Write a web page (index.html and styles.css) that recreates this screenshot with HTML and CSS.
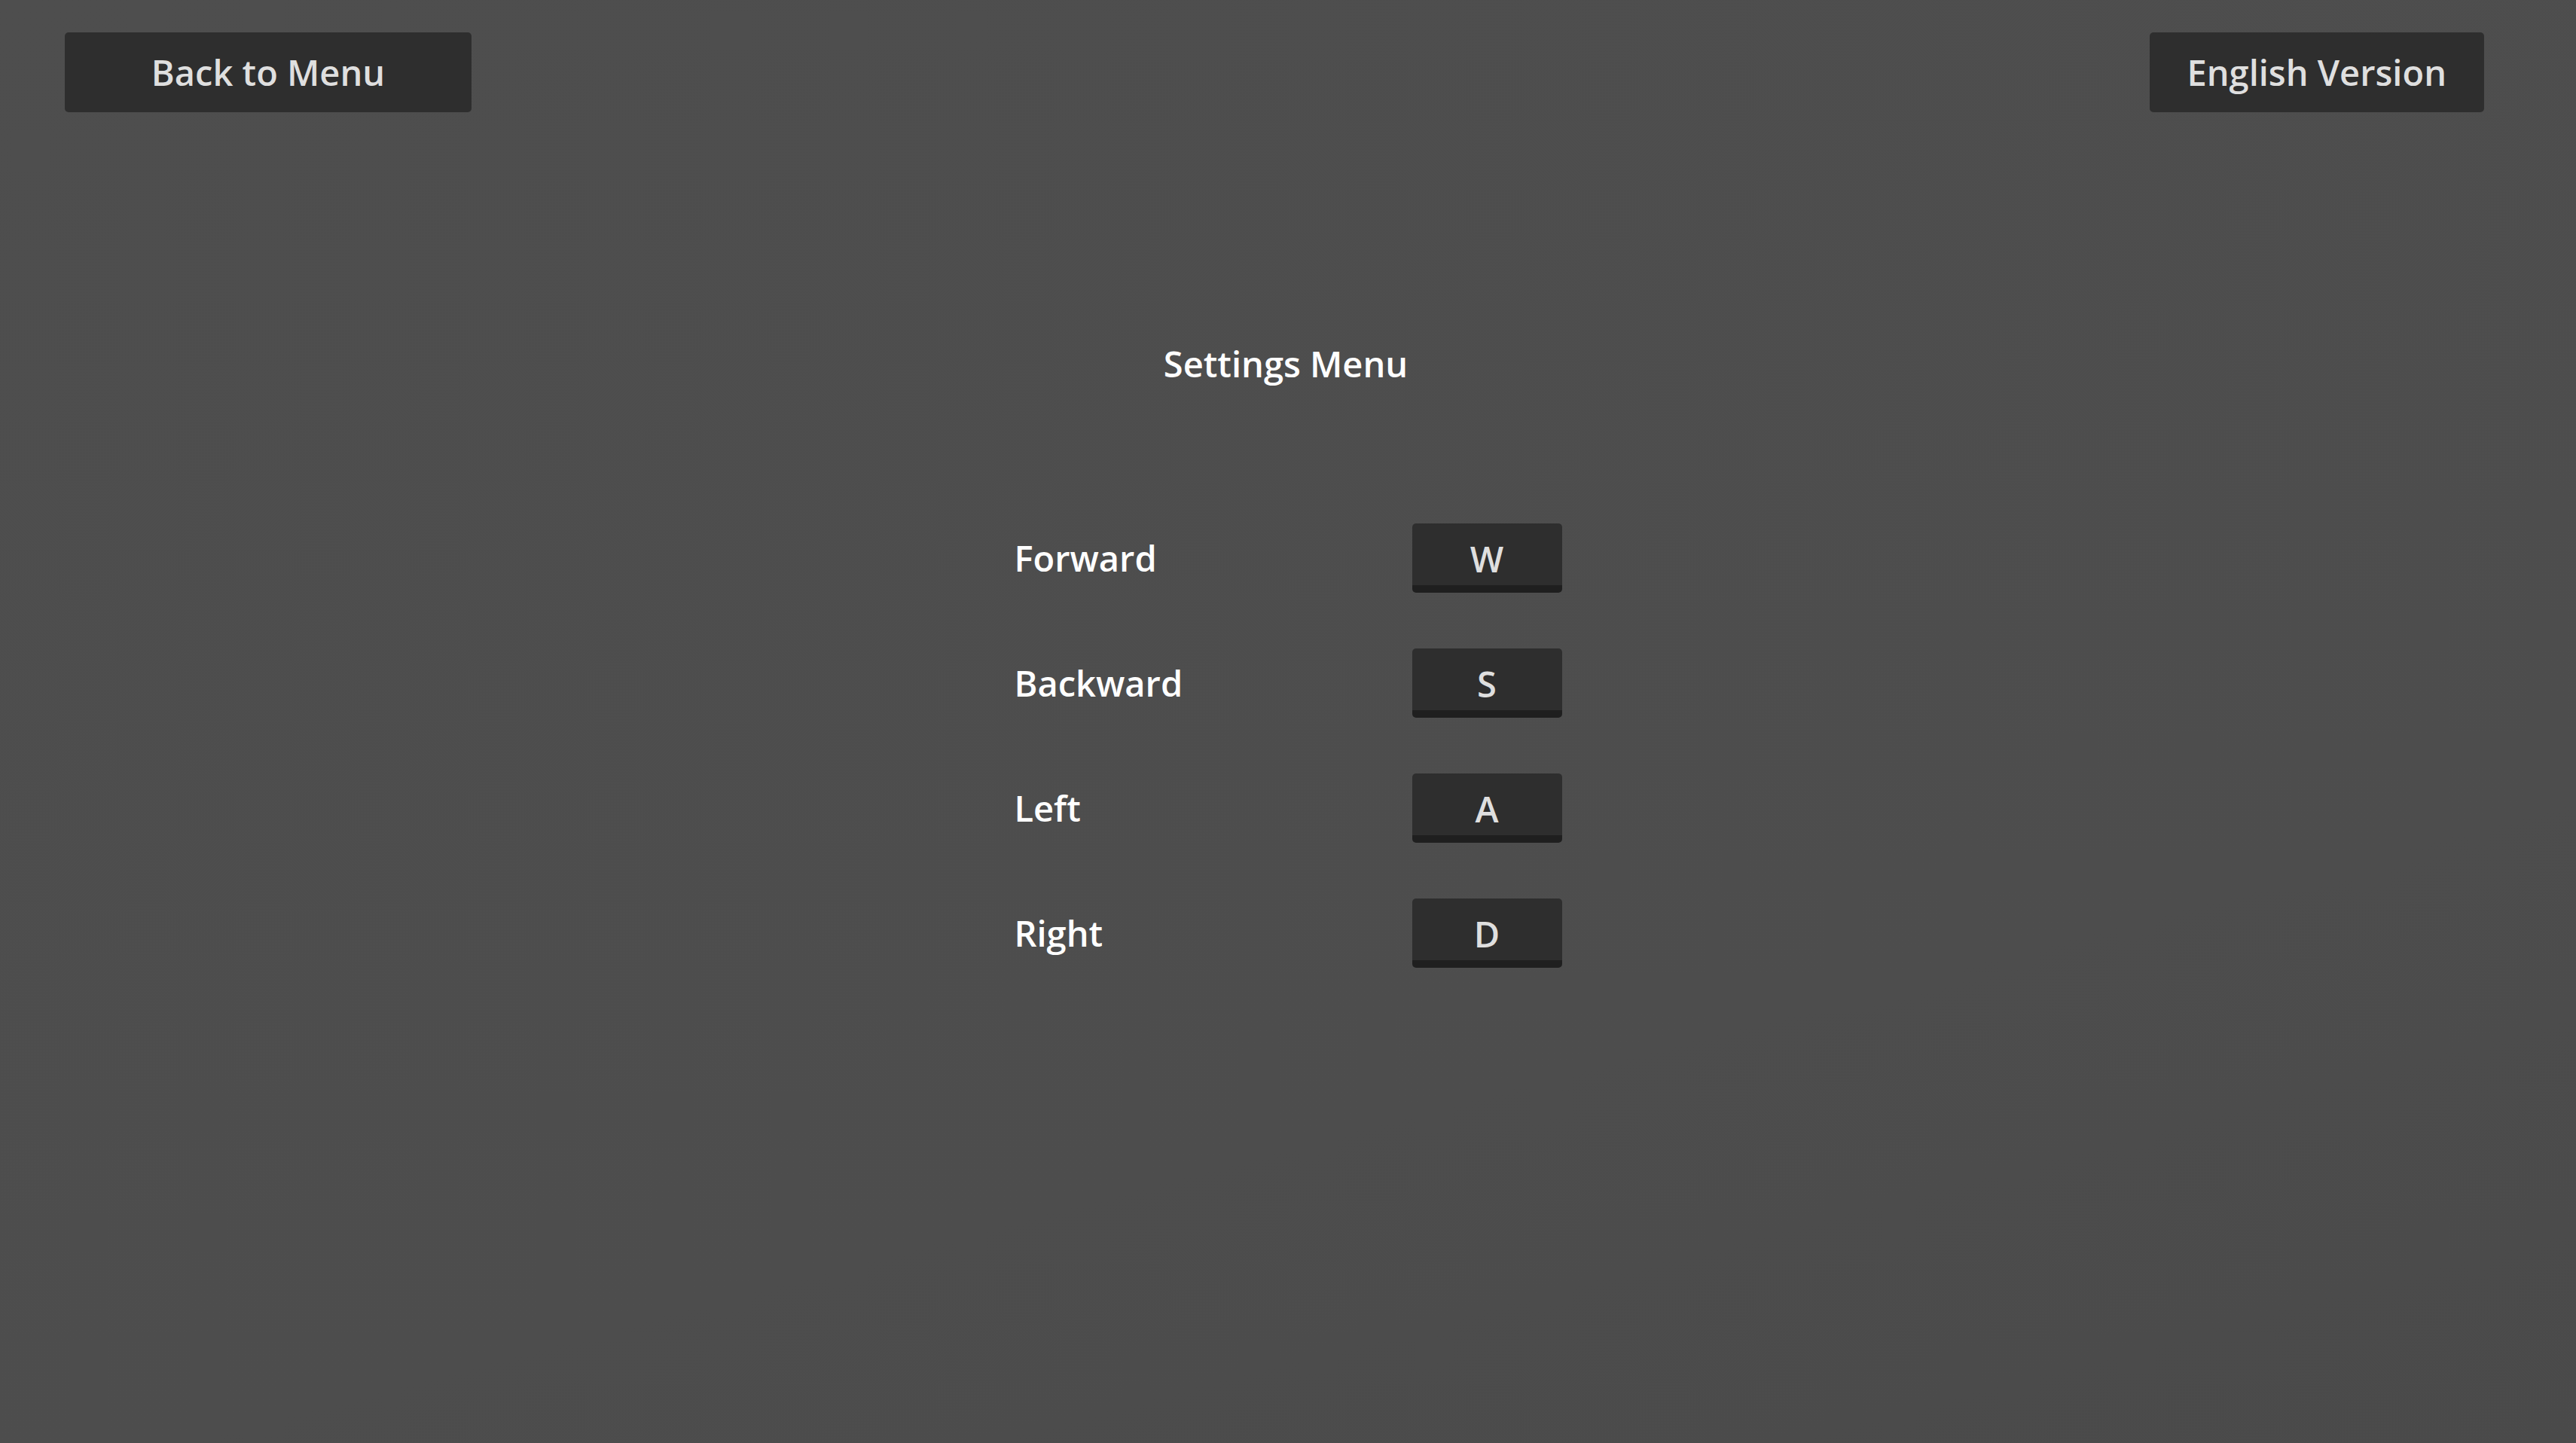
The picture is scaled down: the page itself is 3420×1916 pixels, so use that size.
FILE: index.html
```html
<!DOCTYPE html>
<html lang="en">
<head>
<meta charset="utf-8">
<title>Settings Menu</title>
<link rel="stylesheet" href="styles.css">
</head>
<body>
<div class="screen">
  <header class="topbar">
    <button class="btn btn-back">Back to Menu</button>
    <button class="btn btn-lang">English Version</button>
  </header>
  <main class="settings">
    <h1 class="title">Settings Menu</h1>
    <div class="bindings">
      <div class="row"><span class="label">Forward</span><button class="key">W</button></div>
      <div class="row"><span class="label">Backward</span><button class="key">S</button></div>
      <div class="row"><span class="label">Left</span><button class="key">A</button></div>
      <div class="row"><span class="label">Right</span><button class="key">D</button></div>
    </div>
  </main>
</div>
</body>
</html>
```

FILE: styles.css
```css
html, body {
  margin: 0;
  padding: 0;
  width: 100%;
  height: 100%;
}

body {
  background: #4d4d4d;
  font-family: "Open Sans", "Noto Sans", "Liberation Sans", sans-serif;
  font-weight: 600;
  font-size: 47px;
  overflow: hidden;
}

.screen {
  width: 3420px;
  height: 1916px;
  box-sizing: border-box;
  background: linear-gradient(165deg, #4e4e4e 0%, #4d4d4d 70%, #4a4a4a 100%);
  display: flex;
  flex-direction: column;
}

.topbar {
  display: flex;
  justify-content: space-between;
  align-items: flex-start;
  padding: 43px 122px 0 86px;
}

.btn {
  font: inherit;
  color: #dfdfdf;
  background: #2e2e2e;
  border: none;
  border-radius: 5px;
  height: 106px;
  line-height: 106px;
  padding: 0 50px;
  margin: 0;
  white-space: nowrap;
}

.btn-back {
  width: 540px;
}

.settings {
  display: flex;
  flex-direction: column;
  align-items: center;
}

.title {
  margin: 302px 0 0 0;
  font-size: 47px;
  font-weight: 600;
  color: #ffffff;
  line-height: 65px;
  padding-right: 6px;
}

.bindings {
  margin-top: 179px;
  display: flex;
  flex-direction: column;
  gap: 74px;
}

.row {
  display: flex;
  align-items: center;
  height: 92px;
}

.label {
  width: 528px;
  color: #ffffff;
  line-height: 65px;
}

.key {
  font: inherit;
  color: #dfdfdf;
  background: #2e2e2e;
  border: none;
  border-bottom: 10px solid #1f1f1f;
  border-radius: 5px;
  width: 199px;
  height: 92px;
  box-sizing: border-box;
  padding: 12px 0 0 0;
  line-height: 70px;
  margin: 0;
  text-align: center;
}
```
